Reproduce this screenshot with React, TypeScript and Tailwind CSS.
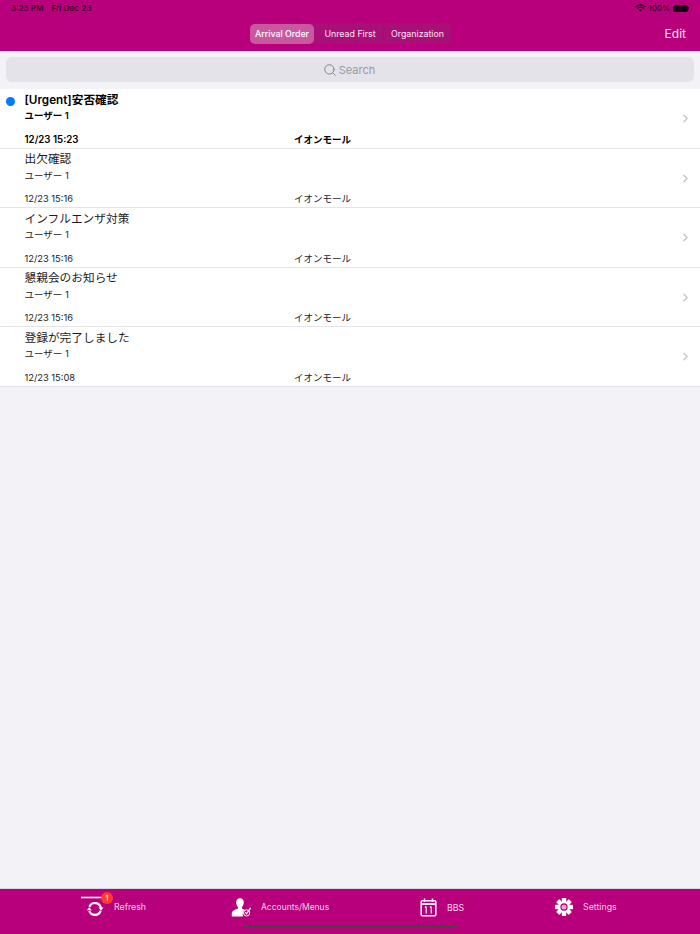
import React from "react";
import { Search, ChevronRight } from "lucide-react";

const font = "font-['Inter','Noto_Sans_CJK_JP',sans-serif]";

type Msg = { title: string; date: string; unread?: boolean };

const messages: Msg[] = [
  { title: "[Urgent]安否確認", date: "12/23 15:23", unread: true },
  { title: "出欠確認", date: "12/23 15:16" },
  { title: "インフルエンザ対策", date: "12/23 15:16" },
  { title: "懇親会のお知らせ", date: "12/23 15:16" },
  { title: "登録が完了しました", date: "12/23 15:08" },
];

const Row = ({ msg }: { msg: Msg }) => (
  <div className="relative h-[59.5px] pl-[24.5px] border-b border-[#e4e4e6]">
    {msg.unread && (
      <div className="absolute left-[6px] top-[8px] w-[9px] h-[9px] rounded-full bg-[#007aff]" />
    )}
    <div className={`text-[11.7px] leading-[20px] pt-[0.5px] text-[#1c1c1e] ${msg.unread ? "font-semibold text-black" : ""}`}>
      {msg.title}
    </div>
    <div className={`text-[9.5px] leading-[14px] -mt-[0.5px] text-[#222] ${msg.unread ? "font-semibold text-black" : ""}`}>
      ユーザー 1
    </div>
    <div className={`flex text-[9.5px] leading-[14px] mt-[9.5px] text-[#222] ${msg.unread ? "font-semibold text-black" : ""}`}>
      <span className={`w-[269.5px] ${msg.unread ? "text-[9.7px]" : "text-[9.3px]"}`}>{msg.date}</span>
      <span>イオンモール</span>
    </div>
    <ChevronRight className="absolute right-[8px] top-[22px] w-[13px] h-[15px] text-[#c4c4c7]" strokeWidth={2.4} />
  </div>
);

const RefreshIcon = () => (
  <svg width="24" height="24" viewBox="0 0 24 24" fill="none" stroke="white">
    <path d="M0 2.5h21" strokeWidth="1.6" />
    <path d="M8.4 11.900A6 6 0 0 1 19.900 12.900" strokeWidth="2.200" />
    <path d="M19.700 15.600A6 6 0 0 1 8.300 15.800" strokeWidth="2.200" />
    <path d="M17.500 12.500h5l-2.500 3z" fill="white" stroke="none" />
    <path d="M5.800 15.200h5l-2.500-3z" fill="white" stroke="none" />
  </svg>
);

const AccountIcon = () => (
  <svg width="21" height="19" viewBox="0 0 21 19" fill="white">
    <path d="M5.200 4.300C5.200 1.900 6.800.3 9 .3s3.800 1.600 3.800 4c0 2-.9 3.900-1.900 4.900v1.300l2.600 1.300c-1.400 1.200-2 3.400-1.600 6.700H.8v-3.300c0-1.800 1.800-2.900 3.500-3.700l2.700-1v-1.300c-1-1-1.800-2.900-1.800-4.900z" />
    <circle cx="15.600" cy="14.900" r="3.100" fill="none" stroke="white" strokeWidth="1" />
    <path d="M14.300 14.300l1.300 1.500 4-6" fill="none" stroke="white" strokeWidth="1.300" />
  </svg>
);

const CalendarIcon = () => (
  <svg width="17" height="19" viewBox="0 0 17 19" fill="none" stroke="white">
    <rect x="1.200" y="2.800" width="14.600" height="15" rx="1" strokeWidth="1.500" />
    <path d="M1 6h15" strokeWidth="1.800" />
    <path d="M4.500 .5v3.300M12.500 .5v3.300" strokeWidth="1.500" />
    <path d="M6.200 8.500v7M6.200 8.500l-1.200 1M11.200 8.500v7M11.200 8.500l-1.200 1" strokeWidth="1.100" />
  </svg>
);

const GearIcon = () => (
  <svg width="18" height="18" viewBox="0 0 18 18">
    <g fill="white">
      {[0, 45, 90, 135, 180, 225, 270, 315].map((a) => (
        <rect key={a} x="6.800" y="0" width="4.400" height="5" rx="0.600" transform={`rotate(${a} 9 9)`} />
      ))}
    </g>
    <circle cx="9" cy="9" r="5.200" fill="white" />
    <circle cx="9" cy="9" r="3" fill="none" stroke="#b8007c" strokeWidth="1.300" />
    <circle cx="9" cy="9" r="2.300" fill="#e9a5d0" />
  </svg>
);

const Tab = ({ icon, label, className }: { icon: React.ReactNode; label: string; className: string }) => (
  <div className={`flex items-center ${className}`}>
    {icon}
    <span className="text-[#f5d5e8]">{label}</span>
  </div>
);

export default function App() {
  return (
    <div className={`w-[700px] h-[934px] flex flex-col bg-[#f2f2f7] overflow-hidden ${font}`}>
      <header className="h-[51px] shrink-0 bg-[#b8007c]">
        <div className="flex justify-between items-center h-[17px] pl-[11px] pr-[11px] text-[8.2px] text-[#1c0014]">
          <div className="flex gap-[8px]">
            <span>3:23 PM</span>
            <span>Fri Dec 23</span>
          </div>
          <div className="flex items-center gap-[2px]">
            <svg width="11" height="8" viewBox="0 0 11 8" fill="none" stroke="#1c0014" strokeWidth="1.200">
              <path d="M.7 2.800a6.800 6.800 0 0 1 9.600 0" />
              <path d="M2.400 4.500a4.400 4.400 0 0 1 6.200 0" />
              <path d="M5.500 7.600L3.900 6a2.200 2.200 0 0 1 3.200 0z" fill="#1c0014" stroke="none" />
            </svg>
            <span>100%</span>
            <div className="flex items-center ml-px">
              <div className="w-[15px] h-[7px] rounded-[2px] bg-[#1c0014]" />
              <div className="w-px h-[3px] bg-[#1c0014]" />
            </div>
          </div>
        </div>
        <div className="flex items-center pl-[250px] pr-[14px] mt-[6px]">
          <div className="h-[21px] w-[201px] rounded-[5px] bg-[#a80f77] flex items-center text-[8.8px] text-[#fbe6f3]">
            <div className="w-[64px] h-[20px] rounded-[5px] bg-[#c9589f] flex items-center justify-center font-medium text-white">
              Arrival Order
            </div>
            <div className="w-[70px] pl-[3px] text-center border-r border-[#b8007c]">Unread First</div>
            <div className="w-[67px] text-center">Organization</div>
          </div>
          <div className="ml-auto text-[12px] leading-[21px] text-[#fbe6f3]">Edit</div>
        </div>
      </header>

      <div className="h-[38px] shrink-0 px-[6px] pt-[6px]">
        <div className="h-[25px] rounded-[6px] bg-[#e3e3e9] flex items-center justify-center gap-[2px] pt-px pr-[2px] text-[11px] text-[#9a9a9f]">
          <Search className="w-[14px] h-[14px] text-[#85858a]" strokeWidth={1.700} />
          <span>Search</span>
        </div>
      </div>

      <main className="bg-white shrink-0">
        {messages.map((m) => (
          <Row key={m.title} msg={m} />
        ))}
      </main>

      <div className="flex-1" />

      <footer className="h-[46px] shrink-0 bg-[#b8007c] relative border-t border-[#d9d9de]">
        <div className="flex items-start pl-[81px] pt-[6px] text-[8.8px]">
          <div className="relative w-[150px]">
            <Tab icon={<RefreshIcon />} label="Refresh" className="gap-[9px]" />
            <div className="absolute left-[20px] -top-[3px] w-[12px] h-[12px] rounded-full bg-[#ff3b30] text-white text-[8px] leading-[12px] text-center">
              1
            </div>
          </div>
          <div className="w-[189px] pt-[3px] text-[8.5px]">
            <Tab icon={<AccountIcon />} label="Accounts/Menus" className="gap-[9px]" />
          </div>
          <div className="w-[135px] pt-[3px]">
            <Tab icon={<CalendarIcon />} label="BBS" className="gap-[10px]" />
          </div>
          <div className="pt-[3px]">
            <Tab icon={<GearIcon />} label="Settings" className="gap-[10px]" />
          </div>
        </div>
        <div className="absolute left-[243px] top-[36px] w-[215px] h-[3px] rounded-full bg-[#444444]" />
      </footer>
    </div>
  );
}
